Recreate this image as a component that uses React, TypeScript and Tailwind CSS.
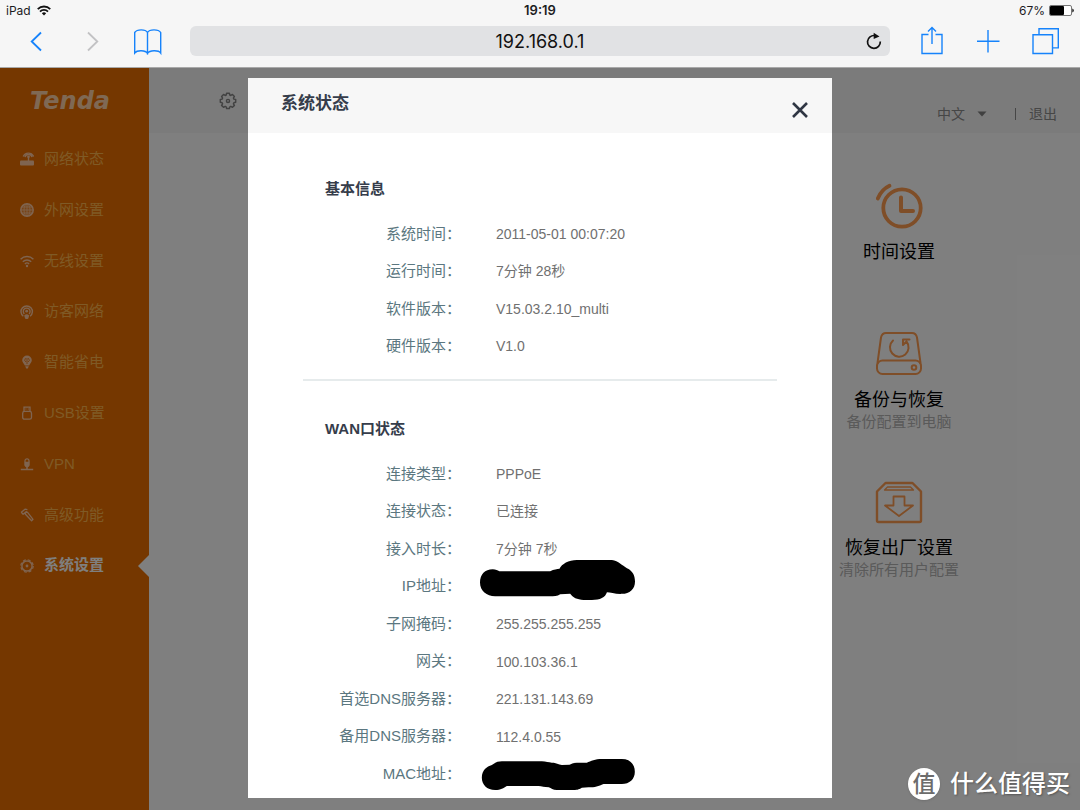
import React from "react";

interface IInfoRow {
  label: string;
  value: React.ReactNode;
}

interface INavItem {
  title: string;
  icon: React.ReactNode;
  active?: boolean;
}

interface ITool {
  title: string;
  note?: string;
  icon: React.ReactNode;
}

const uiFont = "font-['Liberation_Sans','Noto_Sans_CJK_SC',sans-serif]";
const systemFont = "font-['Inter','Noto_Sans_CJK_SC',sans-serif]";

function IpScribble() {
  return (
    <svg className="-mt-5 -mb-2 -ml-4 block" width="155" height="40" viewBox="30 38 464 119" aria-hidden="true">
      <path d="M30 105C30 80 45 65 68 65C78 65 82 68 88 71H240C252 65 260 66 268 64C275 50 295 38 320 38H425C445 40 455 55 470 62C488 70 494 85 494 102C494 125 478 139 455 139C435 140 420 134 410 134C405 150 390 157 365 157H340C320 157 308 150 300 139L270 140C262 146 250 146 240 146H75C50 146 30 130 30 105Z" />
    </svg>
  );
}

function MacScribble() {
  return (
    <svg className="-my-2 -ml-4 block" width="155" height="31" viewBox="30 632 464 93" aria-hidden="true">
      <path d="M35 688C35 665 50 655 65 650C75 642 85 639 95 639H215C228 639 235 643 245 643C258 643 265 648 275 650L298 649C305 645 312 643 320 643H350C362 638 375 632 395 632H455C480 632 494 648 494 670C494 692 478 707 455 707H400C385 714 375 717 355 717L335 718C325 724 320 725 305 725H260C248 725 243 720 236 717C222 717 215 713 205 713H110C100 720 92 725 75 725C50 725 35 708 35 688Z" />
    </svg>
  );
}

const basicInfo: IInfoRow[] = [
  { label: "系统时间", value: "2011-05-01 00:07:20" },
  { label: "运行时间", value: "7分钟 28秒" },
  { label: "软件版本", value: "V15.03.2.10_multi" },
  { label: "硬件版本", value: "V1.0" },
];

const wanInfo: IInfoRow[] = [
  { label: "连接类型", value: "PPPoE" },
  { label: "连接状态", value: "已连接" },
  { label: "接入时长", value: "7分钟 7秒" },
  { label: "IP地址", value: <IpScribble /> },
  { label: "子网掩码", value: "255.255.255.255" },
  { label: "网关", value: "100.103.36.1" },
  { label: "首选DNS服务器", value: "221.131.143.69" },
  { label: "备用DNS服务器", value: "112.4.0.55" },
  { label: "MAC地址", value: <MacScribble /> },
];

const gearPath =
  "M8.3 1.5h3.4l.5 2.200 1.300.550 1.950-1.200 2.400 2.400-1.200 1.950.550 1.300 2.200.500v3.400l-2.200.500-.550 1.300 1.200 1.950-2.400 2.400-1.950-1.200-1.300.550-.500 2.200H8.300l-.500-2.200-1.300-.550-1.950 1.200-2.400-2.400 1.200-1.950-.550-1.300-2.200-.500V9.200l2.200-.500.550-1.300-1.200-1.950 2.400-2.400 1.950 1.200 1.300-.550z";

const navItems: INavItem[] = [
  {
    title: "网络状态",
    icon: (
      <>
        <rect x="0" y="8.5" width="14" height="5" rx="1" fill="currentColor" />
        <path d="M8.5 9V4.5M5 5.2a3.6 3.6 0 0 1 7 0M3.2 4.6a5.6 5.6 0 0 1 10.4 0" fill="none" stroke="currentColor" strokeWidth="1.4" />
        <circle cx="8.5" cy="4.8" r="1.3" fill="currentColor" />
      </>
    ),
  },
  {
    title: "外网设置",
    icon: (
      <>
        <circle cx="7" cy="7" r="6.2" fill="currentColor" fillOpacity=".3" stroke="currentColor" strokeWidth="1.5" />
        <path d="M1 7h12M7 1v12M2 4h10M2 10h10" stroke="currentColor" strokeWidth=".8" />
        <ellipse cx="7" cy="7" rx="3" ry="6" fill="none" stroke="currentColor" strokeWidth=".8" />
      </>
    ),
  },
  {
    title: "无线设置",
    icon: (
      <>
        <path d="M.6 5.2a9 9 0 0 1 12.800 0M2.800 7.700a6 6 0 0 1 8.400 0M4.900 9.900a3 3 0 0 1 4.200 0" fill="none" stroke="currentColor" strokeWidth="1.4" />
        <circle cx="7" cy="12" r="1.2" fill="currentColor" />
      </>
    ),
  },
  {
    title: "访客网络",
    icon: (
      <>
        <path d="M3.300 11.200a5.700 5.700 0 1 1 6.800 0M4.300 8.900a3.400 3.400 0 1 1 4.800 0" fill="none" stroke="currentColor" strokeWidth="1.4" />
        <circle cx="6.7" cy="6.2" r="1.4" fill="currentColor" />
        <path d="M4.200 10.400q2.500-2.200 5 0L8.300 13.400q-1.600 1.200-3.200 0z" fill="currentColor" />
      </>
    ),
  },
  {
    title: "智能省电",
    icon: (
      <>
        <path d="M7 .5a4.800 4.800 0 0 0-4.800 4.800c0 2.400 2 3.200 2.600 5.300h4.400c.6-2.100 2.600-2.900 2.600-5.300A4.800 4.800 0 0 0 7 .5zM5.200 11.200h3.600L7.800 13.600H6.200z" fill="currentColor" />
        <path d="M5.500 3.200L4.700 5.400 6 7M8.400 3.200l1 2.200L8 7M7 3v6" fill="none" stroke="#ea6e00" strokeWidth=".8" />
      </>
    ),
  },
  {
    title: "USB设置",
    icon: (
      <>
        <path d="M4 5.500V1.200h6v4.300" fill="none" stroke="currentColor" strokeWidth="1.3" />
        <path d="M5.300 3h1.200M7.700 3h1.200" stroke="currentColor" strokeWidth="1.2" />
        <rect x="2.7" y="5.4" width="8.8" height="7.8" rx="1.8" fill="none" stroke="currentColor" strokeWidth="1.3" />
      </>
    ),
  },
  {
    title: "VPN",
    icon: (
      <>
        <path d="M5 5V3.800a2 2 0 0 1 4 0V5" fill="none" stroke="currentColor" strokeWidth="1.2" />
        <path d="M4.300 4.800h5.400v3.400q-.6 2-2.700 2.400-2.100-.4-2.700-2.400zM6.200 10h1.600v2H6.200zM.8 11.800h12.400v1.500H.8z" fill="currentColor" />
      </>
    ),
  },
  {
    title: "高级功能",
    icon: (
      <path d="M1 4.600L5 1.200l2.400.5M1.300 4.200l1.800 2 3.600-3M5.600 4.600l1.800-.4 5.600 7.100-1.400 1.500L5.200 6z" fill="none" stroke="currentColor" strokeWidth="1.3" strokeLinejoin="round" />
    ),
  },
  {
    title: "系统设置",
    active: true,
    icon: (
      <>
        <circle cx="7" cy="7" r="5.1" fill="none" stroke="currentColor" strokeWidth="1.5" />
        <circle cx="7" cy="7" r="6.2" fill="none" stroke="currentColor" strokeWidth="1.2" strokeDasharray="2.900 1.970" />
        <circle cx="7" cy="7" r="1.4" fill="currentColor" />
      </>
    ),
  },
];

const tools: ITool[] = [
  {
    title: "时间设置",
    icon: (
      <>
        <circle cx="27" cy="25" r="18.7" strokeWidth="3.8" />
        <path d="M26 14.500V28h12" strokeWidth="4" />
        <path d="M2.800 15.500Q6.500 6.500 14.500 2.800" strokeWidth="3.800" />
      </>
    ),
  },
  {
    title: "备份与恢复",
    note: "备份配置到电脑",
    icon: (
      <>
        <path d="M2.500 32L6 6.500Q7 2 11 2h26q4 0 5 4.500L45.500 32" strokeWidth="2" />
        <rect x="2" y="29.500" width="44" height="13.500" rx="5.500" strokeWidth="2" />
        <circle cx="39" cy="36.500" r="2.300" strokeWidth="2" />
        <path d="M18 9.500A9.300 9.300 0 1 0 31.500 10.500L28 14V8.500h6.500" strokeWidth="2" />
      </>
    ),
  },
  {
    title: "恢复出厂设置",
    note: "清除所有用户配置",
    icon: (
      <>
        <path d="M2 12.500L10.500 4h27L46 12.500V41.500Q46 43 44.500 43h-41Q2 43 2 41.500z" strokeWidth="2.400" />
        <path d="M9.500 11l3-3h23l3 3z" strokeWidth="1.300" />
        <path d="M18.500 17.500h11v9h8.500L24 37 10 26.500h8.500z" strokeWidth="1.800" />
      </>
    ),
  },
];

function StatusBar() {
  return (
    <div className="grid h-[21px] grid-cols-3 items-center px-[6px] text-xs text-[#1c1c1e]">
      <div className="flex items-center gap-[6px]">
        <span>iPad</span>
        <svg width="14" height="11" viewBox="0 0 13 10" fill="none" stroke="#111" strokeWidth="1.700" aria-hidden="true">
          <path d="M.7 3.700a8.200 8.200 0 0 1 11.600 0M2.800 6a5.300 5.300 0 0 1 7.400 0" />
          <path d="M6.500 9.700L4.500 7.600a2.900 2.900 0 0 1 4 0z" fill="#111" stroke="none" />
        </svg>
      </div>
      <span className="text-center text-[13px] font-semibold">19:19</span>
      <div className="flex items-center justify-end gap-1">
        <span>67%</span>
        <svg width="25" height="11" viewBox="0 0 25 11" aria-hidden="true">
          <rect x=".5" y=".5" width="22" height="10" rx="1.500" fill="#fff" stroke="#777" />
          <rect x="1" y="1" width="14" height="9" rx="1" fill="#000" />
          <path d="M23.300 3.500q1.500.3 1.500 2t-1.500 2z" fill="#111" />
        </svg>
      </div>
    </div>
  );
}

function BarButton({ label, children, muted }: { label: string; children: React.ReactNode; muted?: boolean }) {
  return (
    <button
      type="button"
      aria-label={label}
      className={muted ? "flex w-14 justify-center text-[#c2c2c4]" : "flex w-14 justify-center text-[#1683fb]"}
    >
      <svg width="30" height="30" viewBox="0 0 30 30" fill="none" stroke="currentColor" strokeWidth="1.400" aria-hidden="true">
        {children}
      </svg>
    </button>
  );
}

function BrowserBar() {
  return (
    <header className={`${systemFont} border-b border-[#a9a9a9] bg-[#f6f6f6]`}>
      <StatusBar />
      <div className="flex items-center px-2 pt-[5px] pb-[11px]">
        <BarButton label="后退">
          <path d="M20 6.500L10.700 15.500 20 24.500" strokeWidth="1.800" />
        </BarButton>
        <BarButton label="前进" muted>
          <path d="M11 6.500l9.300 9-9.300 9" strokeWidth="1.800" />
        </BarButton>
        <BarButton label="书签">
          <path d="M14.500 6.500C12.500 3 4 3 1.700 6.500v20.500C4 24 12.500 24 14.500 27.500 16.500 24 25.500 24 27.700 27V6.500C25.500 3 16.500 3 14.500 6.500zM14.500 6.500v22" />
        </BarButton>
        <div className="relative mx-[14px] flex-1">
          <input
            aria-label="地址"
            defaultValue="192.168.0.1"
            className="h-[30px] w-full rounded-md bg-[#e1e2e4] text-center text-[18px] text-[#111] outline-none"
          />
          <button type="button" aria-label="刷新" className="absolute top-[6px] right-[7px]">
            <svg width="18" height="18" viewBox="0 0 18 18" fill="none" stroke="#111" strokeWidth="1.700" aria-hidden="true">
              <path d="M15.300 9.500A6.400 6.400 0 1 1 10 3.600" />
              <path d="M8.700.8l5.800 3.600L8.700 7z" fill="#111" stroke="none" />
            </svg>
          </button>
        </div>
        <BarButton label="分享">
          <path d="M11.500 8.500H5v19h20v-19h-6.500M15 18V1.500M11 5.500l4-4 4 4" />
        </BarButton>
        <BarButton label="新标签页">
          <path d="M15 4v22.500M4 15.300h22.500" />
        </BarButton>
        <BarButton label="标签页">
          <path d="M4 8.700h19.500v18.800H4zM10 8.500V2.700h19.300v19.200h-5.500" />
        </BarButton>
      </div>
    </header>
  );
}

function Sidebar() {
  return (
    <aside className="w-[149px] shrink-0 bg-[#ea6e00]">
      <div className="flex h-[66px] items-center pl-[30px] font-['DejaVu_Sans',sans-serif] text-[24px] font-bold text-[#ffd2a8] italic">
        Tenda
      </div>
      <nav>
        <ul className="grid h-[457px] auto-rows-fr">
          {navItems.map((item) => (
            <li key={item.title} className="relative flex items-center">
              <a
                href="#"
                className={
                  item.active
                    ? "flex items-center gap-[10px] pl-5 text-[15px] font-bold text-white"
                    : "flex items-center gap-[10px] pl-5 text-[15px] text-[#ffb44c]"
                }
              >
                <svg width="14" height="14" viewBox="0 0 14 14" className="text-[#ffc9a0]" aria-hidden="true">
                  {item.icon}
                </svg>
                {item.title}
              </a>
              {item.active && (
                <svg className="absolute right-0" width="11" height="22" viewBox="0 0 11 22" aria-hidden="true">
                  <path d="M11 0v22L0 11z" fill="#fff" />
                </svg>
              )}
            </li>
          ))}
        </ul>
      </nav>
    </aside>
  );
}

function TopBar() {
  return (
    <div className="flex h-[65px] items-center bg-[#f6f6f6] pr-[23px] pl-[70px] text-sm text-[#8c8c8c]">
      <svg width="18" height="18" viewBox="-1 0 22 22" fill="none" stroke="#858585" strokeWidth="1.800" strokeLinejoin="round" aria-hidden="true">
        <path d={gearPath} />
        <circle cx="10" cy="10.900" r="1.900" />
      </svg>
      <div className="ml-auto flex items-center self-end pb-[9px]">
        <div className="relative flex items-center">
          <select aria-label="语言" className="w-[50px] appearance-none bg-transparent outline-none">
            <option>中文</option>
          </select>
          <svg className="pointer-events-none absolute right-0" width="10" height="6" viewBox="0 0 10 6" aria-hidden="true">
            <path d="M.5.500h9L5 5.500z" fill="#808080" />
          </svg>
        </div>
        <span className="mr-[13px] ml-7 h-3 w-px bg-[#8c8c8c]" />
        <a href="#">退出</a>
      </div>
    </div>
  );
}

function Tool({ title, note, icon }: ITool) {
  return (
    <a href="#" className="flex h-[148px] flex-col items-center">
      <svg width="48" height="48" viewBox="0 0 48 48" fill="none" stroke="#ff9c50" strokeLinecap="round" strokeLinejoin="round" aria-hidden="true">
        {icon}
      </svg>
      <span className="mt-[9px] text-[18px] leading-6 text-black">{title}</span>
      {note && <span className="text-[15px] leading-5 text-[#b4b4b4]">{note}</span>}
    </a>
  );
}

function InfoList({ rows, className }: { rows: IInfoRow[]; className: string }) {
  return (
    <dl className={`grid auto-rows-fr grid-cols-[158px_1fr] items-center gap-x-[35px] ${className}`}>
      {rows.map((row) => (
        <React.Fragment key={row.label}>
          <dt className="text-right text-[15px] text-[#5b7780]">{row.label}：</dt>
          <dd className="text-sm text-[#707070]">{row.value}</dd>
        </React.Fragment>
      ))}
    </dl>
  );
}

function StatusDialog() {
  return (
    <section role="dialog" aria-labelledby="dialog-title" className="w-[584px] bg-white">
      <div className="flex h-[55px] items-center justify-between bg-[#f7f7f7] pr-[23px] pl-[33px]">
        <h2 id="dialog-title" className="pb-1 text-[17px] leading-6 font-bold text-[#363d4b]">
          系统状态
        </h2>
        <button type="button" aria-label="关闭" className="pt-2">
          <svg width="18" height="18" viewBox="0 0 18 18" stroke="#2f3643" strokeWidth="2.600" aria-hidden="true">
            <path d="M2 2l14 14M16 2L2 16" />
          </svg>
        </button>
      </div>
      <div className="px-[55px] pt-11 pb-[5px]">
        <h3 className="pl-[22px] text-[15px] leading-6 font-bold text-[#363d4b]">基本信息</h3>
        <InfoList rows={basicInfo} className="mt-[14px] h-[150px]" />
        <hr className="mt-[14px] border-t-2 border-[#e6ebec]" />
        <h3 className="mt-9 pl-[22px] text-[15px] leading-6 font-bold text-[#363d4b]">WAN口状态</h3>
        <InfoList rows={wanInfo} className="mt-[14px] h-[338px]" />
      </div>
    </section>
  );
}

function Watermark() {
  return (
    <div className="absolute right-[10px] bottom-[10px] flex items-center gap-[10px] text-white">
      <span className="flex h-8 w-8 items-center justify-center rounded-full bg-white text-[23px] leading-8 font-medium text-[#6c6c6c] shadow">
        值
      </span>
      <span className="text-[24px] leading-8 font-medium [text-shadow:1px_1px_2px_#555]">什么值得买</span>
    </div>
  );
}

export default function App() {
  return (
    <div lang="zh-CN" className={`${uiFont} relative flex min-h-screen flex-col bg-white`}>
      <BrowserBar />
      <main className="grid flex-1">
        <div className="col-start-1 row-start-1 flex">
          <Sidebar />
          <div className="flex-1">
            <TopBar />
            <div className="mr-[101px] ml-auto w-40 pt-[50px]">
              {tools.map((tool) => (
                <Tool key={tool.title} {...tool} />
              ))}
            </div>
          </div>
        </div>
        <div className="z-10 col-start-1 row-start-1 flex items-start justify-center bg-black/50 pt-[10px] pb-[11px]">
          <StatusDialog />
        </div>
      </main>
      <div className="relative z-20">
        <Watermark />
      </div>
    </div>
  );
}
